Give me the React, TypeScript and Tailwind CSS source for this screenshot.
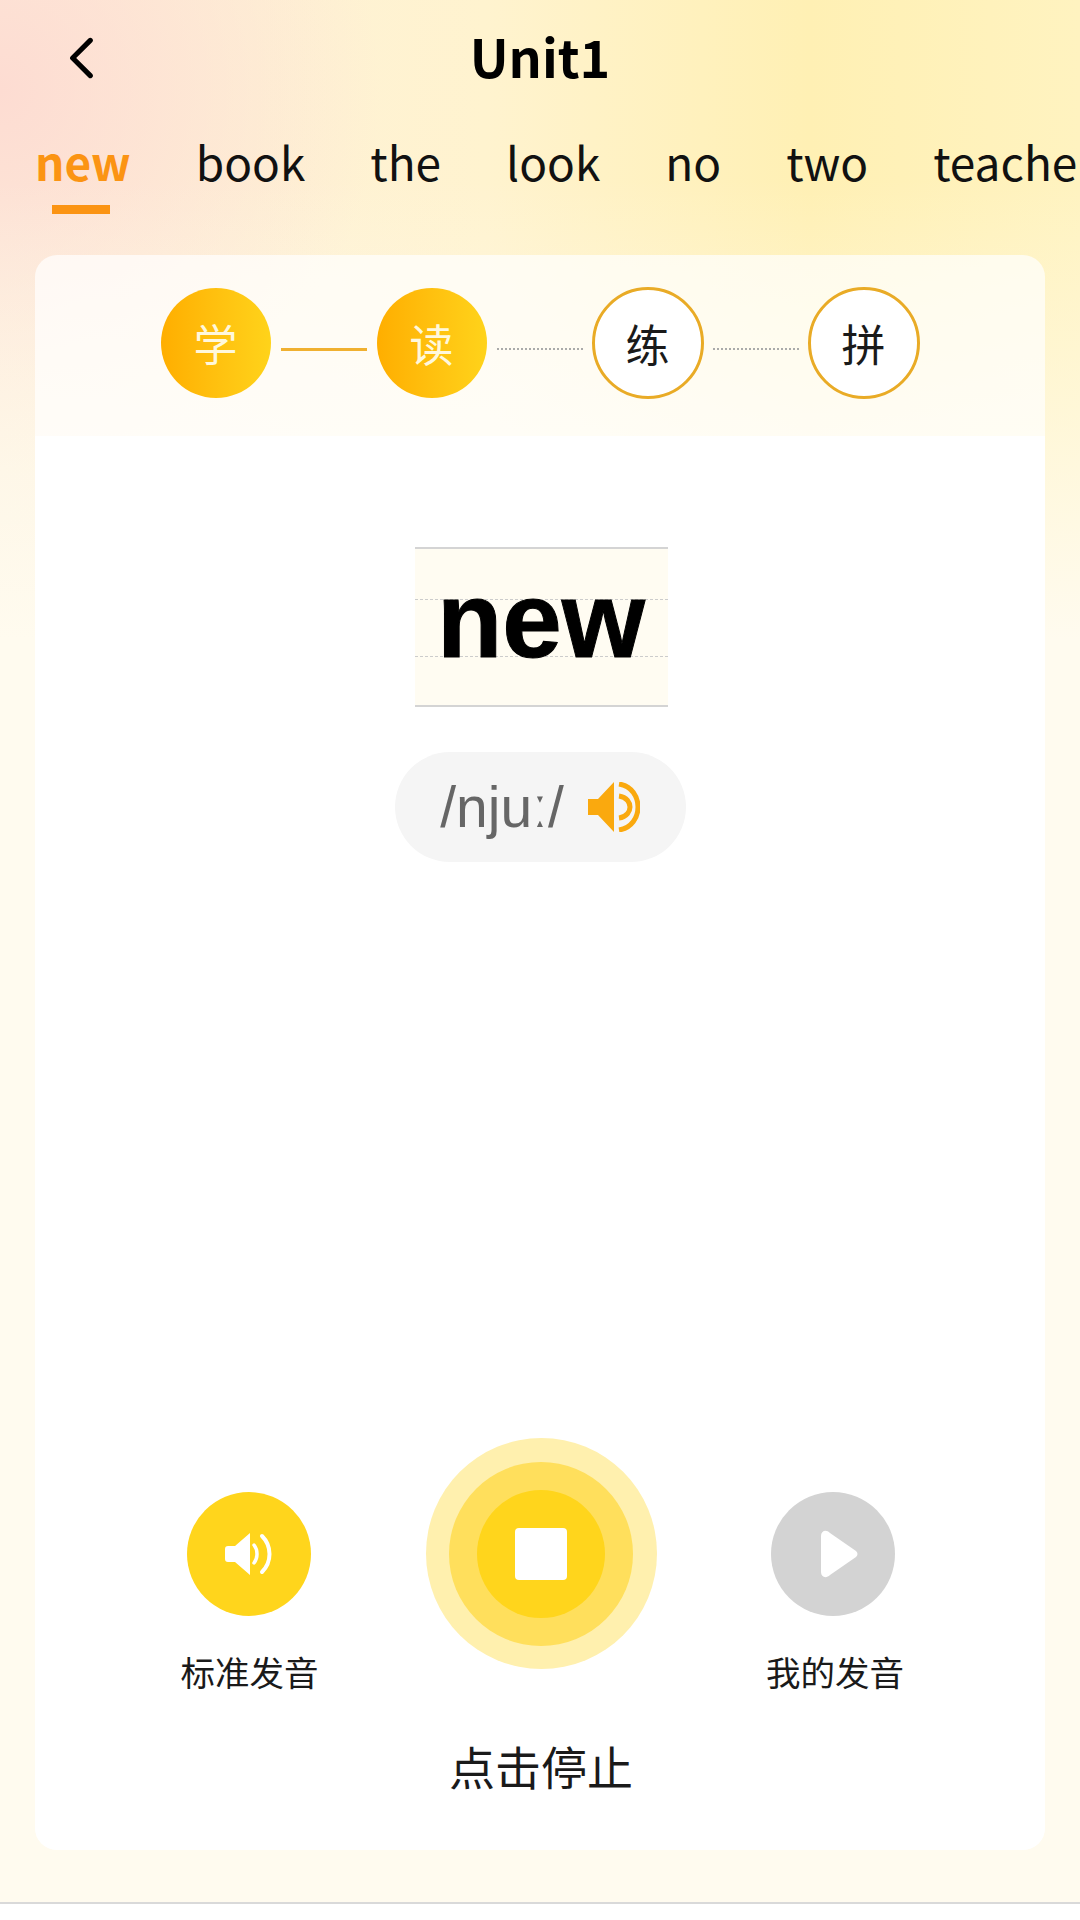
import React from 'react';

const cjk = "font-['Noto_Sans_CJK_SC',sans-serif]";

const words = ['new', 'book', 'the', 'look', 'no', 'two', 'teacher'];

const Step: React.FC<{ label: string; done?: boolean }> = ({ label, done }) => (
  done ? (
    <div className="flex h-[110px] w-[110px] shrink-0 items-center justify-center rounded-full bg-gradient-to-r from-[#ffae00] to-[#ffd31a] text-[44px] leading-none text-[#fff8dc]">
      {label}
    </div>
  ) : (
    <div className="flex h-[112px] w-[112px] shrink-0 items-center justify-center rounded-full border-[3px] border-[#e9ab26] bg-white text-[44px] leading-none text-[#1a1a1a]">
      {label}
    </div>
  )
);

export default function App() {
  return (
    <div className={`${cjk} flex h-[1920px] w-[1080px] flex-col overflow-hidden bg-white`}>
      <div className="flex h-[1904px] flex-col border-b-2 border-[#d9d9d9] bg-[#fffbef] bg-[linear-gradient(to_bottom,rgba(255,251,239,0)_0px,rgba(255,251,239,0)_180px,#fffbef_640px),radial-gradient(ellipse_380px_380px_at_0px_90px,#fddcd2_0%,rgba(253,220,210,0)_100%),linear-gradient(to_right,#fdf0dc_0%,#fff3cf_45%,#fff0b4_75%,#fff3c0_100%)]">
        {/* Header */}
        <div className="relative flex h-[116px] shrink-0 items-center justify-center">
          <svg viewBox="0 0 28 44" className="absolute left-[68px] top-[37px] h-[42px] w-[26px]" fill="none">
            <path d="M24 3L5 22l19 19" stroke="#000" strokeWidth="5.5" strokeLinecap="round" strokeLinejoin="round" />
          </svg>
          <span className="mb-[5px] text-[52px] font-bold leading-none text-black">Unit1</span>
        </div>

        {/* Word tabs */}
        <div className="flex h-[139px] shrink-0 gap-[65px] overflow-hidden whitespace-nowrap pl-[35px] pt-[15px]">
          {words.map((w, i) => (
            <div key={w} className="flex shrink-0 flex-col items-center">
              <span className={`text-[46px] leading-[60px] ${i === 0 ? 'font-bold text-[#fb9413]' : 'text-[#111]'}`}>{w}</span>
              {i === 0 && <div className="mr-[3px] mt-[14px] h-[9px] w-[58px] bg-[#fb9413]" />}
            </div>
          ))}
        </div>

        {/* Card */}
        <div className="mx-[35px] flex h-[1595px] shrink-0 flex-col overflow-hidden rounded-[22px] bg-white/70">
          {/* Steps */}
          <div className="flex h-[181px] shrink-0 items-center justify-center pb-[5px]">
            <Step label="学" done />
            <div className="mx-[10px] mt-[12px] h-[3px] w-[86px] bg-[#f0b030]" />
            <Step label="读" done />
            <div className="ml-[10px] mr-[9px] mt-[12px] h-0 w-[86px] border-t-2 border-dotted border-[#aaa]" />
            <Step label="练" />
            <div className="mx-[9px] mt-[12px] h-0 w-[86px] border-t-2 border-dotted border-[#aaa]" />
            <Step label="拼" />
          </div>

          <div className="flex flex-1 flex-col items-center bg-white pl-[2px]">
            {/* Word writing box */}
            <div className="mt-[111px] flex h-[160px] w-[253px] flex-col justify-start border-y-2 border-[#d4d4d4] bg-[#fffcf2] pt-[50px]">
              <div className="flex h-[58px] items-center justify-center border-y border-dashed border-[#ccc] pb-[16px] font-['Liberation_Sans',sans-serif] text-[107px] font-bold leading-none text-black [-webkit-text-stroke:1px_black]">
                new
              </div>
            </div>

            {/* Phonetic pill */}
            <div className="mr-[2px] mt-[45px] flex h-[110px] w-[291px] items-center justify-center gap-[24px] rounded-full bg-[#f5f5f5]">
              <span className="font-['Liberation_Sans',sans-serif] text-[57px] leading-none text-[#666]">/njuː/</span>
              <svg viewBox="0 0 52 50" className="h-[50px] w-[52px]" fill="none">
                <path d="M0 17h10L26 0v50L10 33H0z" fill="#faa90e" />
                <path d="M31 14c8 1 11 7 11 11s-3 10-11 11" stroke="#faa90e" strokeWidth="5" />
                <path d="M31 2c13 2 19 13 19 23s-6 21-19 23" stroke="#faa90e" strokeWidth="5" />
              </svg>
            </div>

            {/* Controls */}
            <div className="mt-[576px] flex w-full items-start justify-center">
              <div className="mt-[54px] flex w-[180px] flex-col items-center">
                <div className="mr-[2px] flex h-[124px] w-[124px] items-center justify-center rounded-full bg-[#ffd51c]">
                  <svg viewBox="0 0 48 42" className="h-[42px] w-[48px]" fill="none">
                    <path d="M3 13h7L25 0v42L10 29H3c-2 0-3-1-3-3V16c0-2 1-3 3-3z" fill="#fff" />
                    <path d="M29 12c4 5 4 13 0 18" stroke="#fff" strokeWidth="3.5" strokeLinecap="round" />
                    <path d="M37 3c10 10 10 26 0 36" stroke="#fff" strokeWidth="4" strokeLinecap="round" />
                  </svg>
                </div>
                <span className="mt-[30px] text-[34.5px] leading-[50px] text-[#1a1a1a]">标准发音</span>
              </div>

              <div className="mx-[86px] flex h-[231px] w-[231px] items-center justify-center rounded-full bg-[#fff0ae]">
                <div className="flex h-[184px] w-[184px] items-center justify-center rounded-full bg-[#ffdf5c]">
                  <div className="flex h-[128px] w-[128px] items-center justify-center rounded-full bg-[#ffd51c]">
                    <div className="h-[52px] w-[52px] rounded-[4px] bg-white" />
                  </div>
                </div>
              </div>

              <div className="mt-[54px] flex w-[180px] flex-col items-center">
                <div className="flex h-[124px] w-[124px] items-center justify-center rounded-full bg-[#d3d3d3]">
                  <svg viewBox="0 0 37 48" className="ml-[14px] h-[48px] w-[37px]">
                    <path d="M0 6c0-5 5-7 9-3l26 18c2 2 2 4 0 6L9 45c-4 4-9 2-9-3z" fill="#fff" />
                  </svg>
                </div>
                <span className="ml-[5px] mt-[30px] text-[34.5px] leading-[50px] text-[#1a1a1a]">我的发音</span>
              </div>
            </div>

            <div className="mt-[39px] text-[46px] leading-[60px] text-[#1a1a1a]">点击停止</div>
          </div>
        </div>
      </div>
    </div>
  );
}
